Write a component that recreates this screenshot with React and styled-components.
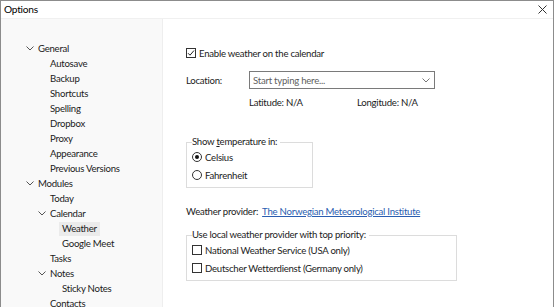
import React from 'react'
import styled, { createGlobalStyle } from 'styled-components'

const Global = createGlobalStyle`
  html, body {
    margin: 0;
    padding: 0;
    background: #fff;
  }
  body {
    font-family: Lato, "Open Sans", "Liberation Sans", sans-serif;
    font-size: 9.6px;
    letter-spacing: -0.25px;
    color: #1b1b1b;
  }
`

const Window = styled.div`
  width: 554px;
  height: 307px;
  box-sizing: border-box;
  border: 1px solid #8c8c8c;
  border-bottom: none;
  display: flex;
  flex-direction: column;
  overflow: hidden;
`

const TitleBar = styled.div`
  height: 18px;
  border-bottom: 1px solid #f0f0f0;
  display: flex;
  align-items: center;
  justify-content: space-between;
  padding: 0 6px 1px 3px;
  box-sizing: border-box;
  font-size: 10.2px;
  color: #000;
`

const CloseButton = styled.svg`
  width: 9px;
  height: 9px;
`

const Body = styled.div`
  flex: 1;
  display: flex;
  min-height: 0;
`

const Sidebar = styled.div`
  width: 162px;
  background: #f9f9f9;
  border-right: 1px solid #eeeeee;
  padding-top: 22px;
  box-sizing: border-box;
`

const Row = styled.div`
  height: 15px;
  display: flex;
  align-items: center;
  padding-left: ${p => 25 + p.level * 12}px;
`

const ChevronSlot = styled.span`
  width: 12px;
  display: flex;
  align-items: center;
  justify-content: flex-start;
  box-sizing: border-box;
`

const Label = styled.span`
  line-height: 14px;
  padding: 0 3px;
  margin-left: -3px;
  background: ${p => (p.selected ? '#ebebeb' : 'transparent')};
  white-space: nowrap;
`

const Content = styled.div`
  flex: 1;
  padding-left: 23px;
  display: flex;
  flex-direction: column;
  align-items: flex-start;
`

const CheckRow = styled.label`
  display: flex;
  align-items: center;
  height: 14px;
  margin-top: ${p => p.top || 0}px;
  white-space: nowrap;
`

const Box = styled.span`
  width: 10px;
  height: 10px;
  box-sizing: border-box;
  border: 1px solid #333;
  background: #fff;
  margin-right: 3px;
  display: flex;
  align-items: center;
  justify-content: center;
  border-radius: ${p => (p.round ? '50%' : '0')};
`

const Dot = styled.span`
  width: 4px;
  height: 4px;
  border-radius: 50%;
  background: #111;
`

const FieldRow = styled.div`
  display: flex;
  align-items: center;
  margin-top: ${p => p.top || 0}px;
`

const FieldLabel = styled.span`
  width: 63px;
`

const Combo = styled.div`
  width: 186px;
  height: 18px;
  box-sizing: border-box;
  border: 1px solid #7a7a7a;
  display: flex;
  align-items: center;
  justify-content: space-between;
  padding: 0 4px 0 3px;
  color: #5f5f5f;
`

const CoordRow = styled.div`
  display: flex;
  margin-top: 6px;
  margin-left: 63px;
  height: 14px;
  align-items: center;
`

const Coord = styled.span`
  width: 108px;
`

const Group = styled.fieldset`
  margin: ${p => p.top}px 0 0 0;
  width: ${p => p.width}px;
  box-sizing: border-box;
  border: 1px solid #dcdcdc;
  padding: 0 5px 5px 5px;
  min-width: 0;
`

const Legend = styled.legend`
  padding: 0 3px 0 0;
  line-height: 14px;
  color: #1b1b1b;
`

const Provider = styled.div`
  display: flex;
  align-items: center;
  height: 14px;
  margin-top: ${p => p.top}px;
`

const Link = styled.a`
  margin-left: 4px;
  color: #2a5db0;
  text-decoration: underline;
  text-underline-offset: 1px;
`

const Chevron = ({ color = '#555' }) => (
  <svg width="8" height="5" viewBox="0 0 8 5">
    <path d="M0.5 0.5 L4 4 L7.5 0.5" fill="none" stroke={color} strokeWidth="1" />
  </svg>
)

const tree = [
  { label: 'General', level: 0, open: true },
  { label: 'Autosave', level: 1 },
  { label: 'Backup', level: 1 },
  { label: 'Shortcuts', level: 1 },
  { label: 'Spelling', level: 1 },
  { label: 'Dropbox', level: 1 },
  { label: 'Proxy', level: 1 },
  { label: 'Appearance', level: 1 },
  { label: 'Previous Versions', level: 1 },
  { label: 'Modules', level: 0, open: true },
  { label: 'Today', level: 1 },
  { label: 'Calendar', level: 1, open: true },
  { label: 'Weather', level: 2, selected: true },
  { label: 'Google Meet', level: 2 },
  { label: 'Tasks', level: 1 },
  { label: 'Notes', level: 1, open: true },
  { label: 'Sticky Notes', level: 2 },
  { label: 'Contacts', level: 1 },
]

const Check = ({ checked }) => (
  <Box>
    {checked && (
      <svg width="8" height="8" viewBox="0 0 8 8">
        <path d="M1 4.2 L3 6.2 L7 1.5" fill="none" stroke="#222" strokeWidth="1" />
      </svg>
    )}
  </Box>
)

const Radio = ({ checked }) => <Box round>{checked && <Dot />}</Box>

export default function App() {
  return (
    <>
      <Global />
      <Window>
        <TitleBar>
          <span>Options</span>
          <CloseButton viewBox="0 0 9 9">
            <path d="M0.5 0.5 L8.5 8.5 M8.5 0.5 L0.5 8.5" stroke="#333" strokeWidth="1" />
          </CloseButton>
        </TitleBar>
        <Body>
          <Sidebar>
            {tree.map(item => (
              <Row key={item.label} level={item.level}>
                <ChevronSlot>{item.open && <Chevron />}</ChevronSlot>
                <Label selected={item.selected}>{item.label}</Label>
              </Row>
            ))}
          </Sidebar>
          <Content>
            <CheckRow top={27}>
              <Check checked />
              Enable weather on the calendar
            </CheckRow>
            <FieldRow top={11}>
              <FieldLabel>Location:</FieldLabel>
              <Combo>
                <span>Start typing here...</span>
                <Chevron color="#777" />
              </Combo>
            </FieldRow>
            <CoordRow>
              <Coord>Latitude: N/A</Coord>
              <Coord>Longitude: N/A</Coord>
            </CoordRow>
            <Group top={26} width={127}>
              <Legend>
                Show <u>t</u>emperature in:
              </Legend>
              <CheckRow top={1}>
                <Radio checked />
                Celsius
              </CheckRow>
              <CheckRow top={4}>
                <Radio />
                Fahrenheit
              </CheckRow>
            </Group>
            <Provider top={16}>
              Weather provider:
              <Link href="#">The Norwegian Meteorological Institute</Link>
            </Provider>
            <Group top={10} width={271}>
              <Legend>Use local weather provider with top priority:</Legend>
              <CheckRow top={1}>
                <Check />
                National Weather Service (USA only)
              </CheckRow>
              <CheckRow top={4}>
                <Check />
                Deutscher Wetterdienst (Germany only)
              </CheckRow>
            </Group>
          </Content>
        </Body>
      </Window>
    </>
  )
}
